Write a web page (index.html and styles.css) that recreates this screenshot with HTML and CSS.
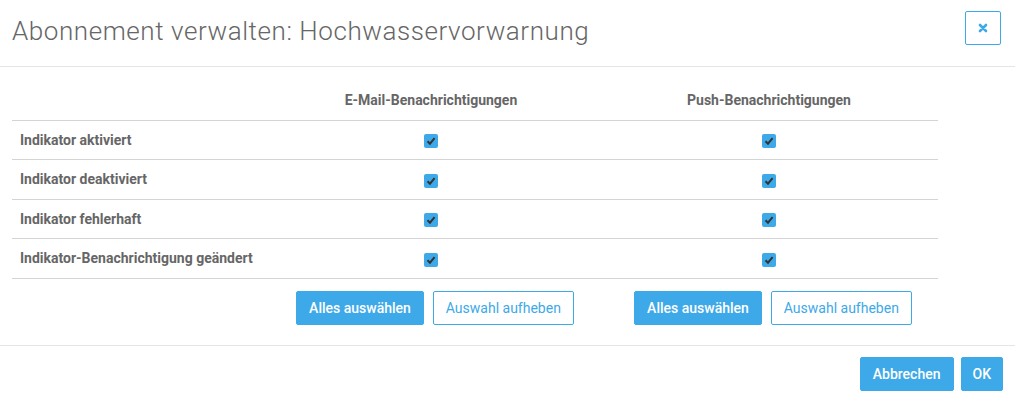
FILE: index.html
```html
<!DOCTYPE html>
<html lang="de">
<head>
<meta charset="utf-8">
<title>Abonnement verwalten</title>
<link rel="stylesheet" href="styles.css">
</head>
<body>
<div class="modal">
  <div class="modal-header">
    <h4 class="modal-title">Abonnement verwalten: Hochwasservorwarnung</h4>
    <button class="close-btn" type="button" aria-label="Schließen">
      <svg width="10" height="10" viewBox="0 0 10 10"><path d="M2 2 L8 8 M8 2 L2 8" stroke="#3da9e8" stroke-width="2.6" stroke-linecap="round"/></svg>
    </button>
  </div>
  <div class="modal-body">
    <table class="subs">
      <thead>
        <tr>
          <th class="col-label"></th>
          <th class="col-check">E-Mail-Benachrichtigungen</th>
          <th class="col-check">Push-Benachrichtigungen</th>
        </tr>
      </thead>
      <tbody>
        <tr>
          <td class="label">Indikator aktiviert</td>
          <td class="check"><span class="cb"><svg viewBox="0 0 14 14"><path d="M3.5 7.2 L6 9.7 L10.6 4.2" fill="none" stroke="#333" stroke-width="2"/></svg></span></td>
          <td class="check"><span class="cb"><svg viewBox="0 0 14 14"><path d="M3.5 7.2 L6 9.7 L10.6 4.2" fill="none" stroke="#333" stroke-width="2"/></svg></span></td>
        </tr>
        <tr>
          <td class="label">Indikator deaktiviert</td>
          <td class="check"><span class="cb"><svg viewBox="0 0 14 14"><path d="M3.5 7.2 L6 9.7 L10.6 4.2" fill="none" stroke="#333" stroke-width="2"/></svg></span></td>
          <td class="check"><span class="cb"><svg viewBox="0 0 14 14"><path d="M3.5 7.2 L6 9.7 L10.6 4.2" fill="none" stroke="#333" stroke-width="2"/></svg></span></td>
        </tr>
        <tr>
          <td class="label">Indikator fehlerhaft</td>
          <td class="check"><span class="cb"><svg viewBox="0 0 14 14"><path d="M3.5 7.2 L6 9.7 L10.6 4.2" fill="none" stroke="#333" stroke-width="2"/></svg></span></td>
          <td class="check"><span class="cb"><svg viewBox="0 0 14 14"><path d="M3.5 7.2 L6 9.7 L10.6 4.2" fill="none" stroke="#333" stroke-width="2"/></svg></span></td>
        </tr>
        <tr>
          <td class="label">Indikator-Benachrichtigung geändert</td>
          <td class="check"><span class="cb"><svg viewBox="0 0 14 14"><path d="M3.5 7.2 L6 9.7 L10.6 4.2" fill="none" stroke="#333" stroke-width="2"/></svg></span></td>
          <td class="check"><span class="cb"><svg viewBox="0 0 14 14"><path d="M3.5 7.2 L6 9.7 L10.6 4.2" fill="none" stroke="#333" stroke-width="2"/></svg></span></td>
        </tr>
      </tbody>
      <tfoot>
        <tr>
          <td></td>
          <td class="actions"><button class="btn btn-primary" type="button">Alles auswählen</button><button class="btn btn-outline" type="button">Auswahl aufheben</button></td>
          <td class="actions"><button class="btn btn-primary" type="button">Alles auswählen</button><button class="btn btn-outline" type="button">Auswahl aufheben</button></td>
        </tr>
      </tfoot>
    </table>
  </div>
  <div class="modal-footer">
    <button class="btn btn-primary" type="button">Abbrechen</button>
    <button class="btn btn-primary btn-narrow" type="button">OK</button>
  </div>
</div>
</body>
</html>
```
FILE: styles.css
```css
* { box-sizing: border-box; }

html, body {
  margin: 0;
  background: #fff;
}

body {
  font-family: Roboto, "Liberation Sans", Arial, sans-serif;
  color: #666;
}

.modal {
  width: 1015px;
}

.modal-header {
  display: flex;
  justify-content: space-between;
  align-items: flex-start;
  height: 67px;
  padding: 11px 14px 0 12px;
  border-bottom: 1px solid #e5e5e5;
}

.modal-title {
  margin: 5px 0 0;
  font-size: 26px;
  font-weight: 300;
  letter-spacing: 0.57px;
  line-height: 30px;
  color: #666;
}

.close-btn {
  width: 36px;
  height: 34px;
  padding: 0;
  border: 1px solid #3da9e8;
  border-radius: 2px;
  background: #fff;
  display: flex;
  align-items: center;
  justify-content: center;
}

.modal-body {
  padding: 13px 12px 20px;
}

.subs {
  width: 926px;
  border-collapse: collapse;
}

.subs th {
  height: 40px;
  font-size: 14px;
  font-weight: 700;
  color: #666;
  border-bottom: 1px solid #d4d4d4;
  padding: 0;
  vertical-align: middle;
}

.col-label { width: 250px; }
.col-check { width: 338px; text-align: center; }

.subs tbody td {
  height: 39.5px;
  border-bottom: 1px solid #d4d4d4;
  padding: 0;
  vertical-align: middle;
}

.label {
  padding-left: 8px !important;
  font-size: 14px;
  font-weight: 700;
  color: #666;
}

.check {
  text-align: center;
}

.cb {
  display: inline-block;
  width: 14px;
  height: 14px;
  border-radius: 2px;
  background: #3da9e8;
  vertical-align: middle;
  line-height: 0;
}

.cb svg {
  width: 14px;
  height: 14px;
}

.actions {
  padding: 12px 0 0 8px;
  text-align: center;
  font-size: 0;
}

.btn {
  height: 34px;
  padding: 0 12px;
  font-family: Roboto, "Liberation Sans", Arial, sans-serif;
  font-size: 14px;
  border-radius: 2px;
  cursor: pointer;
  vertical-align: middle;
}

.btn-narrow { padding: 0 11px; }

.actions .btn + .btn { margin-left: 9px; }

.btn-primary {
  background: #3da9e8;
  border: 1px solid #3da9e8;
  color: #fff;
  font-weight: 500;
}

.btn-outline {
  background: #fff;
  border: 1px solid #3da9e8;
  color: #3da9e8;
  font-weight: 400;
}

.modal-footer {
  display: flex;
  justify-content: flex-end;
  gap: 7px;
  padding: 11px 12px 0;
  border-top: 1px solid #e5e5e5;
}
```
